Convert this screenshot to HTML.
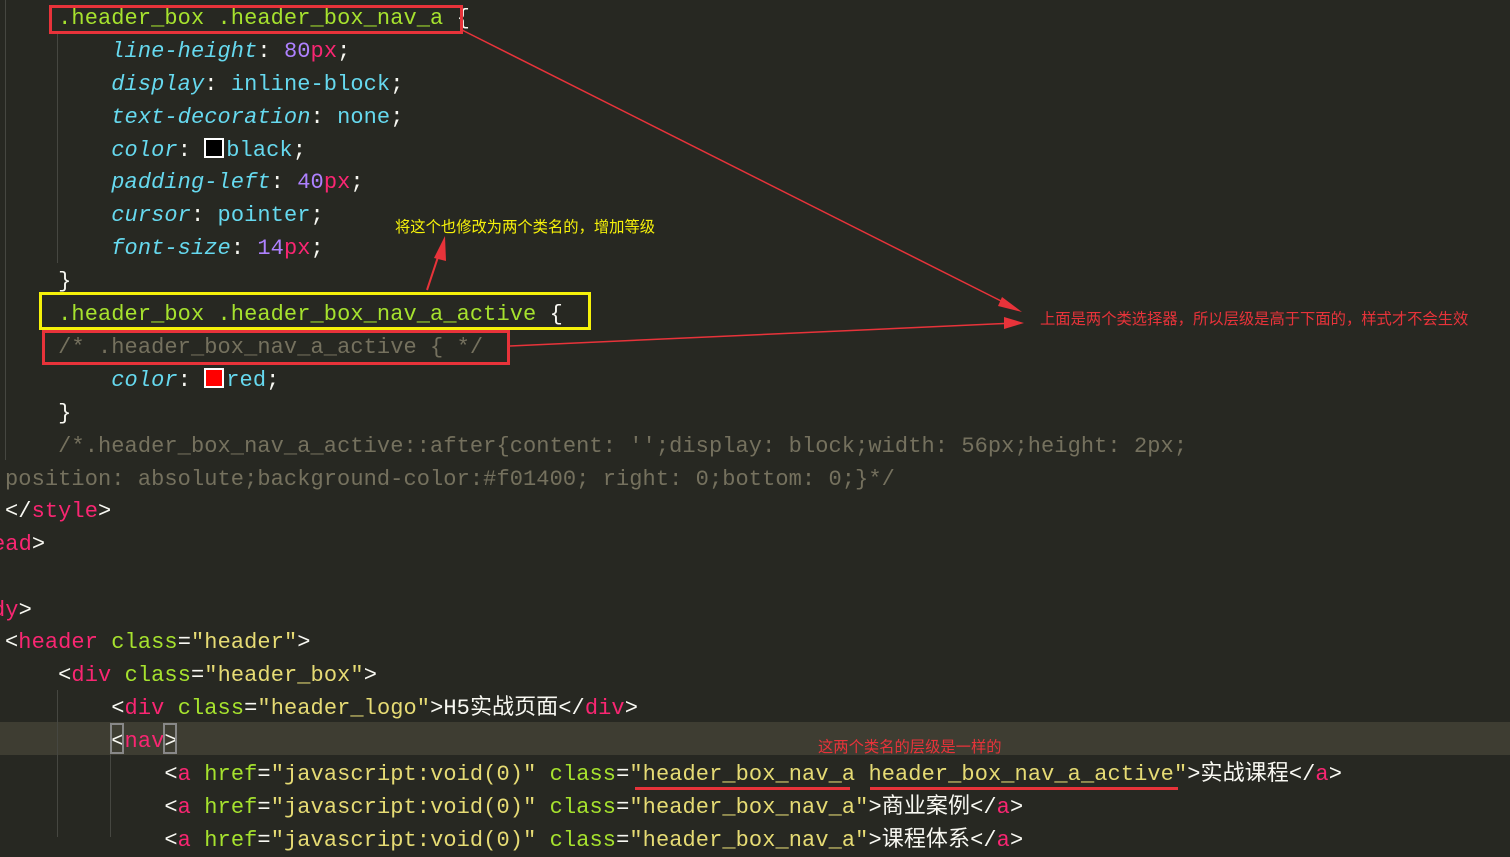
<!DOCTYPE html>
<html><head><meta charset="utf-8"><style>
body{margin:0;width:1510px;height:837px;background:#272822;overflow:hidden;position:relative;font-family:"Liberation Mono","Noto Sans CJK SC",monospace;font-size:22px;color:#f8f8f2;letter-spacing:0.08px}
.l{position:absolute;left:5px;height:33px;line-height:33px;white-space:pre;margin-top:2px}
.t{color:#f92672}.a{color:#a6e22e}.s{color:#e6db74}.p{color:#66d9ef;font-style:italic}.v{color:#66d9ef}.n{color:#ae81ff}.c{color:#75715e}
.sw{display:inline-block;width:16px;height:16px;border:2px solid #fff;vertical-align:-2px;margin-right:2px}
.g{position:absolute;width:1px;background:#464741}
.box{position:absolute;border:3px solid}
.ann{position:absolute;font-family:"Noto Sans CJK SC",sans-serif;font-size:15.3px;white-space:nowrap;letter-spacing:0}
</style></head><body>
<div style="position:absolute;left:0;top:722px;width:1510px;height:33px;background:#3e3d32"></div>
<div class="g" style="left:5px;top:0;height:460px"></div>
<div class="g" style="left:57px;top:33px;height:230px"></div>
<div class="g" style="left:57px;top:690px;height:147px"></div>
<div class="g" style="left:110px;top:722px;height:115px"></div>
<div class="l" style="top:0">    <span class="a">.header_box .header_box_nav_a</span> {</div>
<div class="l" style="top:33px">        <span class="p">line-height</span>: <span class="n">80</span><span class="t">px</span>;</div>
<div class="l" style="top:66px">        <span class="p">display</span>: <span class="v">inline-block</span>;</div>
<div class="l" style="top:99px">        <span class="p">text-decoration</span>: <span class="v">none</span>;</div>
<div class="l" style="top:132px">        <span class="p">color</span>: <span class="sw" style="background:#000"></span><span class="v">black</span>;</div>
<div class="l" style="top:164px">        <span class="p">padding-left</span>: <span class="n">40</span><span class="t">px</span>;</div>
<div class="l" style="top:197px">        <span class="p">cursor</span>: <span class="v">pointer</span>;</div>
<div class="l" style="top:230px">        <span class="p">font-size</span>: <span class="n">14</span><span class="t">px</span>;</div>
<div class="l" style="top:263px">    }</div>
<div class="l" style="top:296px">    <span class="a">.header_box .header_box_nav_a_active</span> {</div>
<div class="l" style="top:329px">    <span class="c">/* .header_box_nav_a_active { */</span></div>
<div class="l" style="top:362px">        <span class="p">color</span>: <span class="sw" style="background:#f00"></span><span class="v">red</span>;</div>
<div class="l" style="top:395px">    }</div>
<div class="l" style="top:428px">    <span class="c">/*.header_box_nav_a_active::after{content: '';display: block;width: 56px;height: 2px;</span></div>
<div class="l" style="top:461px"><span class="c">position: absolute;background-color:#f01400; right: 0;bottom: 0;}*/</span></div>
<div class="l" style="top:493px">&lt;/<span class="t">style</span>&gt;</div>
<div class="l" style="top:526px;left:-8px"><span class="t">ead</span>&gt;</div>
<div class="l" style="top:592px;left:-8px"><span class="t">dy</span>&gt;</div>
<div class="l" style="top:624px">&lt;<span class="t">header</span> <span class="a">class</span>=<span class="s">"header"</span>&gt;</div>
<div class="l" style="top:657px">    &lt;<span class="t">div</span> <span class="a">class</span>=<span class="s">"header_box"</span>&gt;</div>
<div class="l" style="top:690px">        &lt;<span class="t">div</span> <span class="a">class</span>=<span class="s">"header_logo"</span>&gt;H5实战页面&lt;/<span class="t">div</span>&gt;</div>
<div class="l" style="top:723px">        &lt;<span class="t">nav</span>&gt;</div>
<div class="l" style="top:756px">            &lt;<span class="t">a</span> <span class="a">href</span>=<span class="s">"javascript:void(0)"</span> <span class="a">class</span>=<span class="s">"header_box_nav_a header_box_nav_a_active"</span>&gt;实战课程&lt;/<span class="t">a</span>&gt;</div>
<div class="l" style="top:789px">            &lt;<span class="t">a</span> <span class="a">href</span>=<span class="s">"javascript:void(0)"</span> <span class="a">class</span>=<span class="s">"header_box_nav_a"</span>&gt;商业案例&lt;/<span class="t">a</span>&gt;</div>
<div class="l" style="top:822px">            &lt;<span class="t">a</span> <span class="a">href</span>=<span class="s">"javascript:void(0)"</span> <span class="a">class</span>=<span class="s">"header_box_nav_a"</span>&gt;课程体系&lt;/<span class="t">a</span>&gt;</div>
<div class="box" style="left:110px;top:723px;width:10px;height:27px;border:2px solid #888"></div>
<div class="box" style="left:163px;top:723px;width:10px;height:27px;border:2px solid #888"></div>
<div class="box" style="left:49px;top:5px;width:408px;height:23px;border-color:#e8333a"></div>
<div class="box" style="left:39px;top:292px;width:546px;height:32px;border-color:#f5f10a"></div>
<div class="box" style="left:42px;top:330px;width:462px;height:29px;border-color:#e8333a"></div>
<div style="position:absolute;left:635px;top:787px;width:215px;height:3px;background:#e8333a"></div>
<div style="position:absolute;left:870px;top:787px;width:308px;height:3px;background:#e8333a"></div>
<svg style="position:absolute;left:0;top:0" width="1510" height="837">
<line x1="462" y1="30" x2="1015" y2="308" stroke="#e8333a" stroke-width="1.5"/>
<polygon points="1022,312 1002,297 998,306" fill="#e8333a"/>
<line x1="510" y1="346" x2="1015" y2="323" stroke="#e8333a" stroke-width="1.5"/>
<polygon points="1024,323 1004,317 1004,329" fill="#e8333a"/>
<line x1="427" y1="290" x2="442" y2="245" stroke="#e8333a" stroke-width="2"/>
<polygon points="445,236 434,258 446,261" fill="#e8333a"/>
</svg>
<div class="ann" style="left:395px;top:215px;color:#f5f10a">将这个也修改为两个类名的，增加等级</div>
<div class="ann" style="left:1040px;top:307px;color:#e8333a">上面是两个类选择器，所以层级是高于下面的，样式才不会生效</div>
<div class="ann" style="left:818px;top:735px;color:#e8333a">这两个类名的层级是一样的</div>
</body></html>
